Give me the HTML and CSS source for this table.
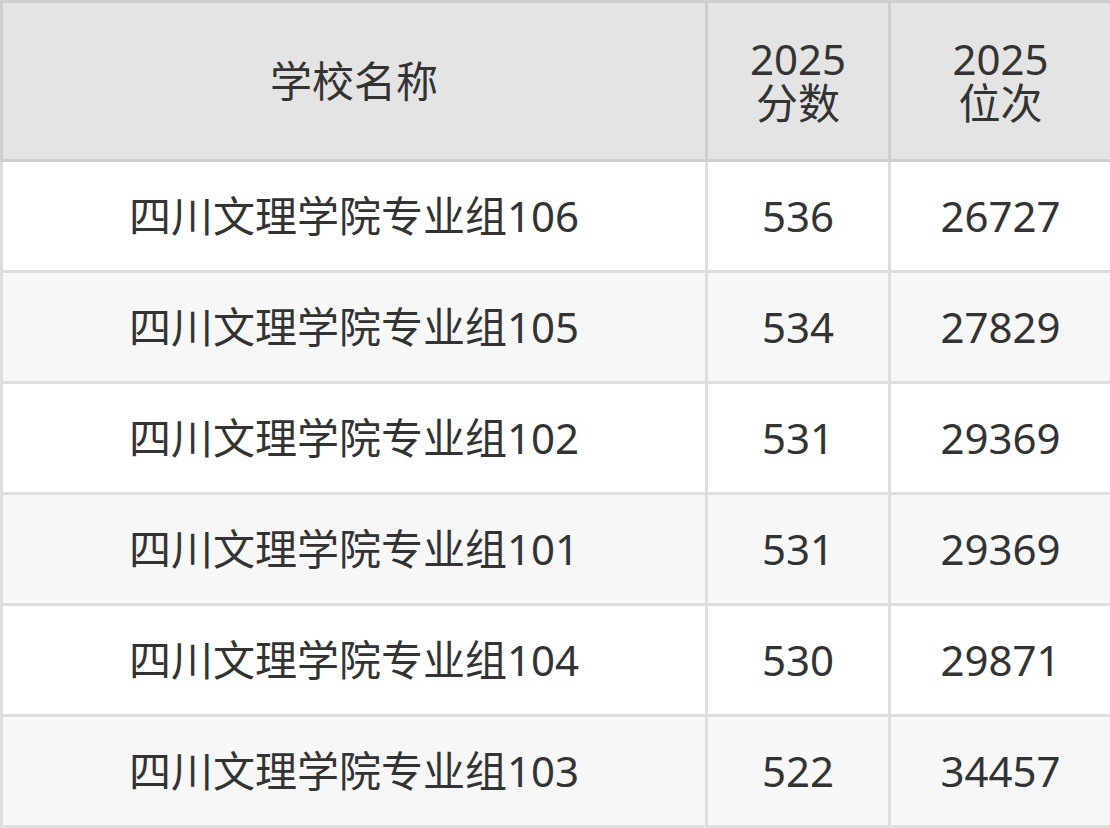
FILE: index.html
```html
<!DOCTYPE html>
<html lang="zh-CN">
<head>
<meta charset="utf-8">
<link rel="stylesheet" href="styles.css">
</head>
<body>
<table class="score-table">
  <colgroup>
    <col class="col-name">
    <col class="col-score">
    <col class="col-rank">
  </colgroup>
  <thead>
    <tr>
      <th>学校名称</th>
      <th>2025<br>分数</th>
      <th>2025<br>位次</th>
    </tr>
  </thead>
  <tbody>
    <tr><td>四川文理学院专业组106</td><td>536</td><td>26727</td></tr>
    <tr><td>四川文理学院专业组105</td><td>534</td><td>27829</td></tr>
    <tr><td>四川文理学院专业组102</td><td>531</td><td>29369</td></tr>
    <tr><td>四川文理学院专业组101</td><td>531</td><td>29369</td></tr>
    <tr><td>四川文理学院专业组104</td><td>530</td><td>29871</td></tr>
    <tr><td>四川文理学院专业组103</td><td>522</td><td>34457</td></tr>
  </tbody>
</table>
</body>
</html>
```
FILE: styles.css
```css
html, body {
  margin: 0;
  padding: 0;
  background: #ffffff;
}
.score-table {
  border-collapse: collapse;
  table-layout: fixed;
  width: 1110px;
  font-family: "Noto Sans", "Noto Sans CJK SC", sans-serif;
  font-size: 42px;
  color: #333333;
}
.col-name { width: 705px; }
.col-score { width: 183px; }
.col-rank { width: 222px; }
.score-table th,
.score-table td {
  text-align: center;
  vertical-align: middle;
  padding: 0;
  font-weight: normal;
}
.score-table th {
  background: #e4e4e4;
  border: 3px solid #cfcfcf;
  height: 156px;
  line-height: 44px;
}
.score-table td {
  border: 3px solid #dedede;
  height: 108px;
  line-height: 50px;
  background: #ffffff;
}
.score-table tbody tr:nth-child(even) td {
  background: #f7f7f7;
}
```
